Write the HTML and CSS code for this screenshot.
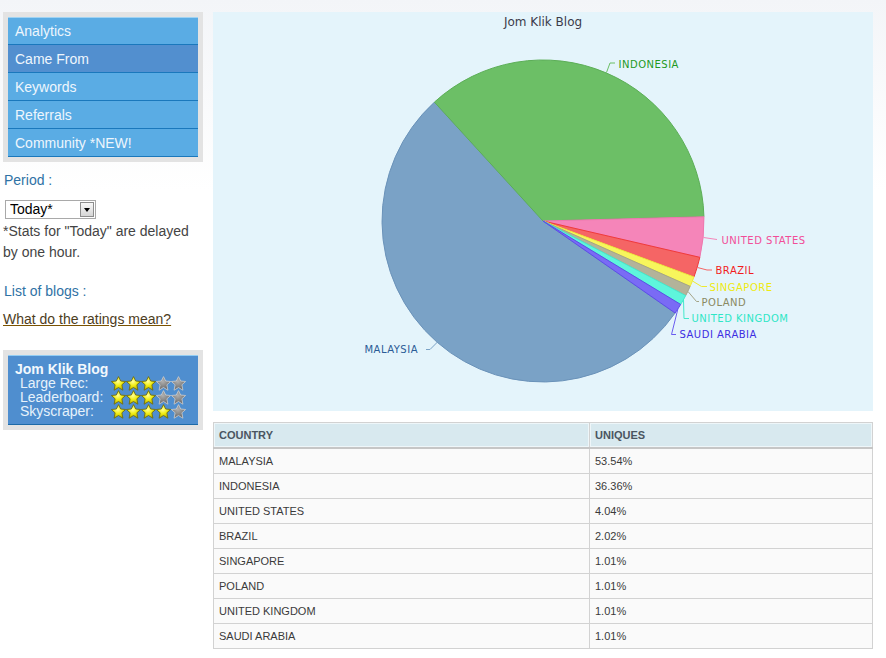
FILE: index.html
```html
<!DOCTYPE html>
<html lang="en">
<head>
  <meta charset="UTF-8" />
  <title>Came From - Jom Klik Blog</title>
  <link rel="stylesheet" href="styles.css">
</head>
<body>
  <svg class="defs" width="0" height="0" aria-hidden="true">
    <defs>
      <radialGradient id="goldFill" cx="45%" cy="35%" r="65%">
        <stop offset="0" stop-color="#ffff9a" />
        <stop offset="0.5" stop-color="#f0ec10" />
        <stop offset="1" stop-color="#b4ac00" />
      </radialGradient>
      <radialGradient id="greyFill" cx="45%" cy="35%" r="65%">
        <stop offset="0" stop-color="#b0b0b0" />
        <stop offset="1" stop-color="#656565" />
      </radialGradient>
      <symbol id="starOn" viewBox="0 0 15 15">
        <polygon points="7.5,0.6 9.7,5 14.6,5.5 10.9,8.8 11.9,14.2 7.5,11.5 3.1,14.2 4.1,8.8 0.4,5.5 5.3,5" fill="url(#goldFill)" stroke="#6f6d12" stroke-width="0.9" stroke-linejoin="round" />
      </symbol>
      <symbol id="starOff" viewBox="0 0 15 15">
        <polygon points="7.5,0.6 9.7,5 14.6,5.5 10.9,8.8 11.9,14.2 7.5,11.5 3.1,14.2 4.1,8.8 0.4,5.5 5.3,5" fill="url(#greyFill)" stroke="#cfcfcf" stroke-width="0.8" stroke-linejoin="round" />
      </symbol>
    </defs>
  </svg>

  <div class="page">
    <!-- left column -->
    <div class="sidebar">
      <ul class="nav">
        <li><a href="#">Analytics</a></li>
        <li><a href="#" class="active">Came From</a></li>
        <li><a href="#">Keywords</a></li>
        <li><a href="#">Referrals</a></li>
        <li><a href="#">Community *NEW!</a></li>
      </ul>

      <div class="label period">Period :</div>
      <div class="select">
        <select>
          <option>Today*</option>
          <option>Yesterday</option>
          <option>Last 7 days</option>
        </select>
        <span class="select-btn"><span class="caret"></span></span>
      </div>
      <p class="note">*Stats for "Today" are delayed by one hour.</p>

      <div class="label blogs">List of blogs :</div>
      <a href="#" class="ratings">What do the ratings mean?</a>

      <div class="blog-box">
        <div class="blog-inner">
          <div class="blog-title">Jom Klik Blog</div>
          <div class="rating-row">
            <span>Large Rec:</span>
            <span class="stars">
              <svg><use href="#starOn"/></svg><svg><use href="#starOn"/></svg><svg><use href="#starOn"/></svg><svg><use href="#starOff"/></svg><svg><use href="#starOff"/></svg>
            </span>
          </div>
          <div class="rating-row">
            <span>Leaderboard:</span>
            <span class="stars">
              <svg><use href="#starOn"/></svg><svg><use href="#starOn"/></svg><svg><use href="#starOn"/></svg><svg><use href="#starOff"/></svg><svg><use href="#starOff"/></svg>
            </span>
          </div>
          <div class="rating-row">
            <span>Skyscraper:</span>
            <span class="stars">
              <svg><use href="#starOn"/></svg><svg><use href="#starOn"/></svg><svg><use href="#starOn"/></svg><svg><use href="#starOn"/></svg><svg><use href="#starOff"/></svg>
            </span>
          </div>
        </div>
      </div>
    </div>

    <!-- right column -->
    <div class="main">
      <div class="chart">
        <svg width="660" height="399" viewBox="0 0 660 399">
          <text class="chart-title" x="330" y="13.5">Jom Klik Blog</text>

          <!-- slices -->
          <path d="M330,209 L462.11,301.02 A161,161 0 1 1 221.44,90.10 Z" fill="#7aa2c6" stroke="#6a92b9" />
          <path d="M330,209 L221.44,90.10 A161,161 0 0 1 490.95,204.79 Z" fill="#6cbf66" stroke="#5cae57" />
          <path d="M330,209 L490.95,204.79 A161,161 0 0 1 486.85,245.34 Z" fill="#f585b9" stroke="#ee78ae" />
          <path d="M330,209 L486.85,245.34 A161,161 0 0 1 480.98,264.90 Z" fill="#f56565" stroke="#f03a3a" />
          <path d="M330,209 L480.98,264.90 A161,161 0 0 1 477.14,274.36 Z" fill="#f7f55c" stroke="#ecea40" />
          <path d="M330,209 L477.14,274.36 A161,161 0 0 1 472.69,283.56 Z" fill="#b3b39a" stroke="#a4a488" />
          <path d="M330,209 L472.69,283.56 A161,161 0 0 1 467.68,292.46 Z" fill="#5ef5dc" stroke="#44e8cc" />
          <path d="M330,209 L467.68,292.46 A161,161 0 0 1 462.11,301.02 Z" fill="#7a6bf5" stroke="#5c4ce8" />

          <!-- leader lines -->
          <g fill="none" stroke-width="1">
            <polyline points="393.5,60.5 397,51 402,51" stroke="#6cbf66" />
            <polyline points="490.5,225.5 504,227.5" stroke="#f585b9" />
            <polyline points="484.5,255.5 494,258 499,258" stroke="#f56565" />
            <polyline points="479.5,269 488.5,274.5 494,274.5" stroke="#eeea30" />
            <polyline points="475,279.5 483.5,289.5 486,289.5" stroke="#a4a488" />
            <polyline points="470.5,287.5 471,306.5 476,306.5" stroke="#44e8cc" />
            <polyline points="465,296.5 458.5,322.5 463,322.5" stroke="#6a5cf0" />
            <polyline points="224.5,330 217,337.5 213,337.5" stroke="#7aa2c6" />
          </g>

          <!-- labels -->
          <g class="pie-label">
            <text x="405.5" y="55.5" fill="#1e9a1e">INDONESIA</text>
            <text x="508.5" y="231.5" fill="#f24d98">UNITED STATES</text>
            <text x="502.5" y="262" fill="#f21d1d">BRAZIL</text>
            <text x="496.5" y="278.5" fill="#eeea10">SINGAPORE</text>
            <text x="488.5" y="293.5" fill="#8a8a62">POLAND</text>
            <text x="478.5" y="310" fill="#2ee6c6">UNITED KINGDOM</text>
            <text x="466.5" y="326" fill="#3e2ee2">SAUDI ARABIA</text>
            <text x="205" y="341" fill="#2b5b96" text-anchor="end">MALAYSIA</text>
          </g>
        </svg>
      </div>

      <table class="stats">
        <colgroup>
          <col class="col-country">
          <col class="col-uniques">
        </colgroup>
        <thead>
          <tr><th>COUNTRY</th><th>UNIQUES</th></tr>
        </thead>
        <tbody>
          <tr><td>MALAYSIA</td><td>53.54%</td></tr>
          <tr><td>INDONESIA</td><td>36.36%</td></tr>
          <tr><td>UNITED STATES</td><td>4.04%</td></tr>
          <tr><td>BRAZIL</td><td>2.02%</td></tr>
          <tr><td>SINGAPORE</td><td>1.01%</td></tr>
          <tr><td>POLAND</td><td>1.01%</td></tr>
          <tr><td>UNITED KINGDOM</td><td>1.01%</td></tr>
          <tr><td>SAUDI ARABIA</td><td>1.01%</td></tr>
        </tbody>
      </table>
    </div>
  </div>
</body>
</html>
```

FILE: styles.css
```css
body {
  margin: 0;
  padding: 12px 3px 0 3px;
  font-family: "Liberation Sans", Arial, sans-serif;
  font-size: 14px;
  color: #444;
  background: linear-gradient(#f3f5f8, #fff 190px) no-repeat #fff;
}
.defs {
  position: absolute;
  width: 0;
  height: 0;
}
.page {
  display: flex;
  align-items: flex-start;
  gap: 10px;
}

/* sidebar */
.sidebar {
  width: 200px;
  flex: none;
}
.nav {
  list-style: none;
  margin: 0;
  padding: 0;
  border: 5px solid #e3e3e3;
}
.nav a {
  display: block;
  height: 27px;
  line-height: 28px;
  padding-left: 7px;
  background: #5aace4;
  color: #eef6fd;
  text-decoration: none;
  border-bottom: 1px solid #1a78bc;
}
.nav li:first-child a {
  height: 26px;
  line-height: 27px;
  border-top: 1px solid #9fd3f3;
}
.nav a.active {
  background: #528fcf;
}
.label {
  line-height: 21px;
  color: #2f72a5;
  padding-left: 1px;
}
.period {
  margin-top: 8px;
}
.select {
  display: flex;
  width: 89px;
  height: 17px;
  margin: 9px 0 0 2px;
  border: 1px solid #a9a9a9;
  background: #fff;
}
.select select {
  flex: 1;
  min-width: 0;
  appearance: none;
  -webkit-appearance: none;
  border: none;
  background: transparent;
  padding: 0 0 0 4px;
  margin: 0;
  font-family: "Liberation Sans", Arial, sans-serif;
  font-size: 14px;
  line-height: 17px;
  color: #000;
  outline: none;
}
.select-btn {
  display: flex;
  align-items: center;
  justify-content: center;
  width: 14px;
  margin: 1px;
  border: 1px solid #8d8d8d;
  box-sizing: border-box;
  background: linear-gradient(#f7f7f7, #d6d6d6);
}
.caret {
  width: 0;
  height: 0;
  border-top: 4px solid #000;
  border-left: 3.5px solid transparent;
  border-right: 3.5px solid transparent;
}
.note {
  margin: 2px 0 0 0;
  line-height: 21px;
}
.blogs {
  margin-top: 18px;
}
.ratings {
  display: inline-block;
  margin-top: 7px;
  line-height: 21px;
  color: #4d3d1d;
  text-decoration: underline;
  text-decoration-color: #7a5200;
}
.blog-box {
  margin-top: 20px;
  border: 5px solid #e3e3e3;
}
.blog-inner {
  background: #4f8ecf;
  border-top: 1px solid #93cdf3;
  border-bottom: 1px solid #1d6aa8;
  padding: 6px 0 6px 0;
  color: #e6f2fb;
}
.blog-title {
  font-weight: bold;
  line-height: 14px;
  padding-left: 7px;
  color: #f2f8fd;
}
.rating-row {
  display: grid;
  grid-template-columns: 91px auto;
  line-height: 14px;
  padding-left: 12px;
}
.stars {
  display: flex;
  align-items: center;
  height: 14px;
}
.stars svg {
  width: 15px;
  height: 15px;
  flex: none;
}

/* main */
.main {
  width: 660px;
  flex: none;
}
.chart {
  height: 399px;
  background: #e4f4fb;
}
.chart svg {
  display: block;
}
.chart-title {
  font-family: "DejaVu Sans", Verdana, sans-serif;
  font-size: 12px;
  fill: #3b3b4a;
  text-anchor: middle;
}
.pie-label text {
  font-family: "DejaVu Sans", Verdana, sans-serif;
  font-size: 10px;
  letter-spacing: 0.5px;
}
.stats {
  width: 660px;
  margin-top: 11px;
  border-collapse: collapse;
  table-layout: fixed;
  font-size: 11px;
  color: #3a3a3a;
}
.col-country {
  width: 376px;
}
.stats th,
.stats td {
  text-align: left;
  padding: 0 5px;
  border: 1px solid #d2d2d2;
}
.stats th {
  height: 24px;
  background: #d8e9ef;
  color: #4a5561;
  font-weight: bold;
  box-shadow: inset 0 0 0 1px #eef6f9;
  border-bottom: 2px solid #c6c6c6;
}
.stats td {
  height: 24px;
  background: #fafafa;
}
```
